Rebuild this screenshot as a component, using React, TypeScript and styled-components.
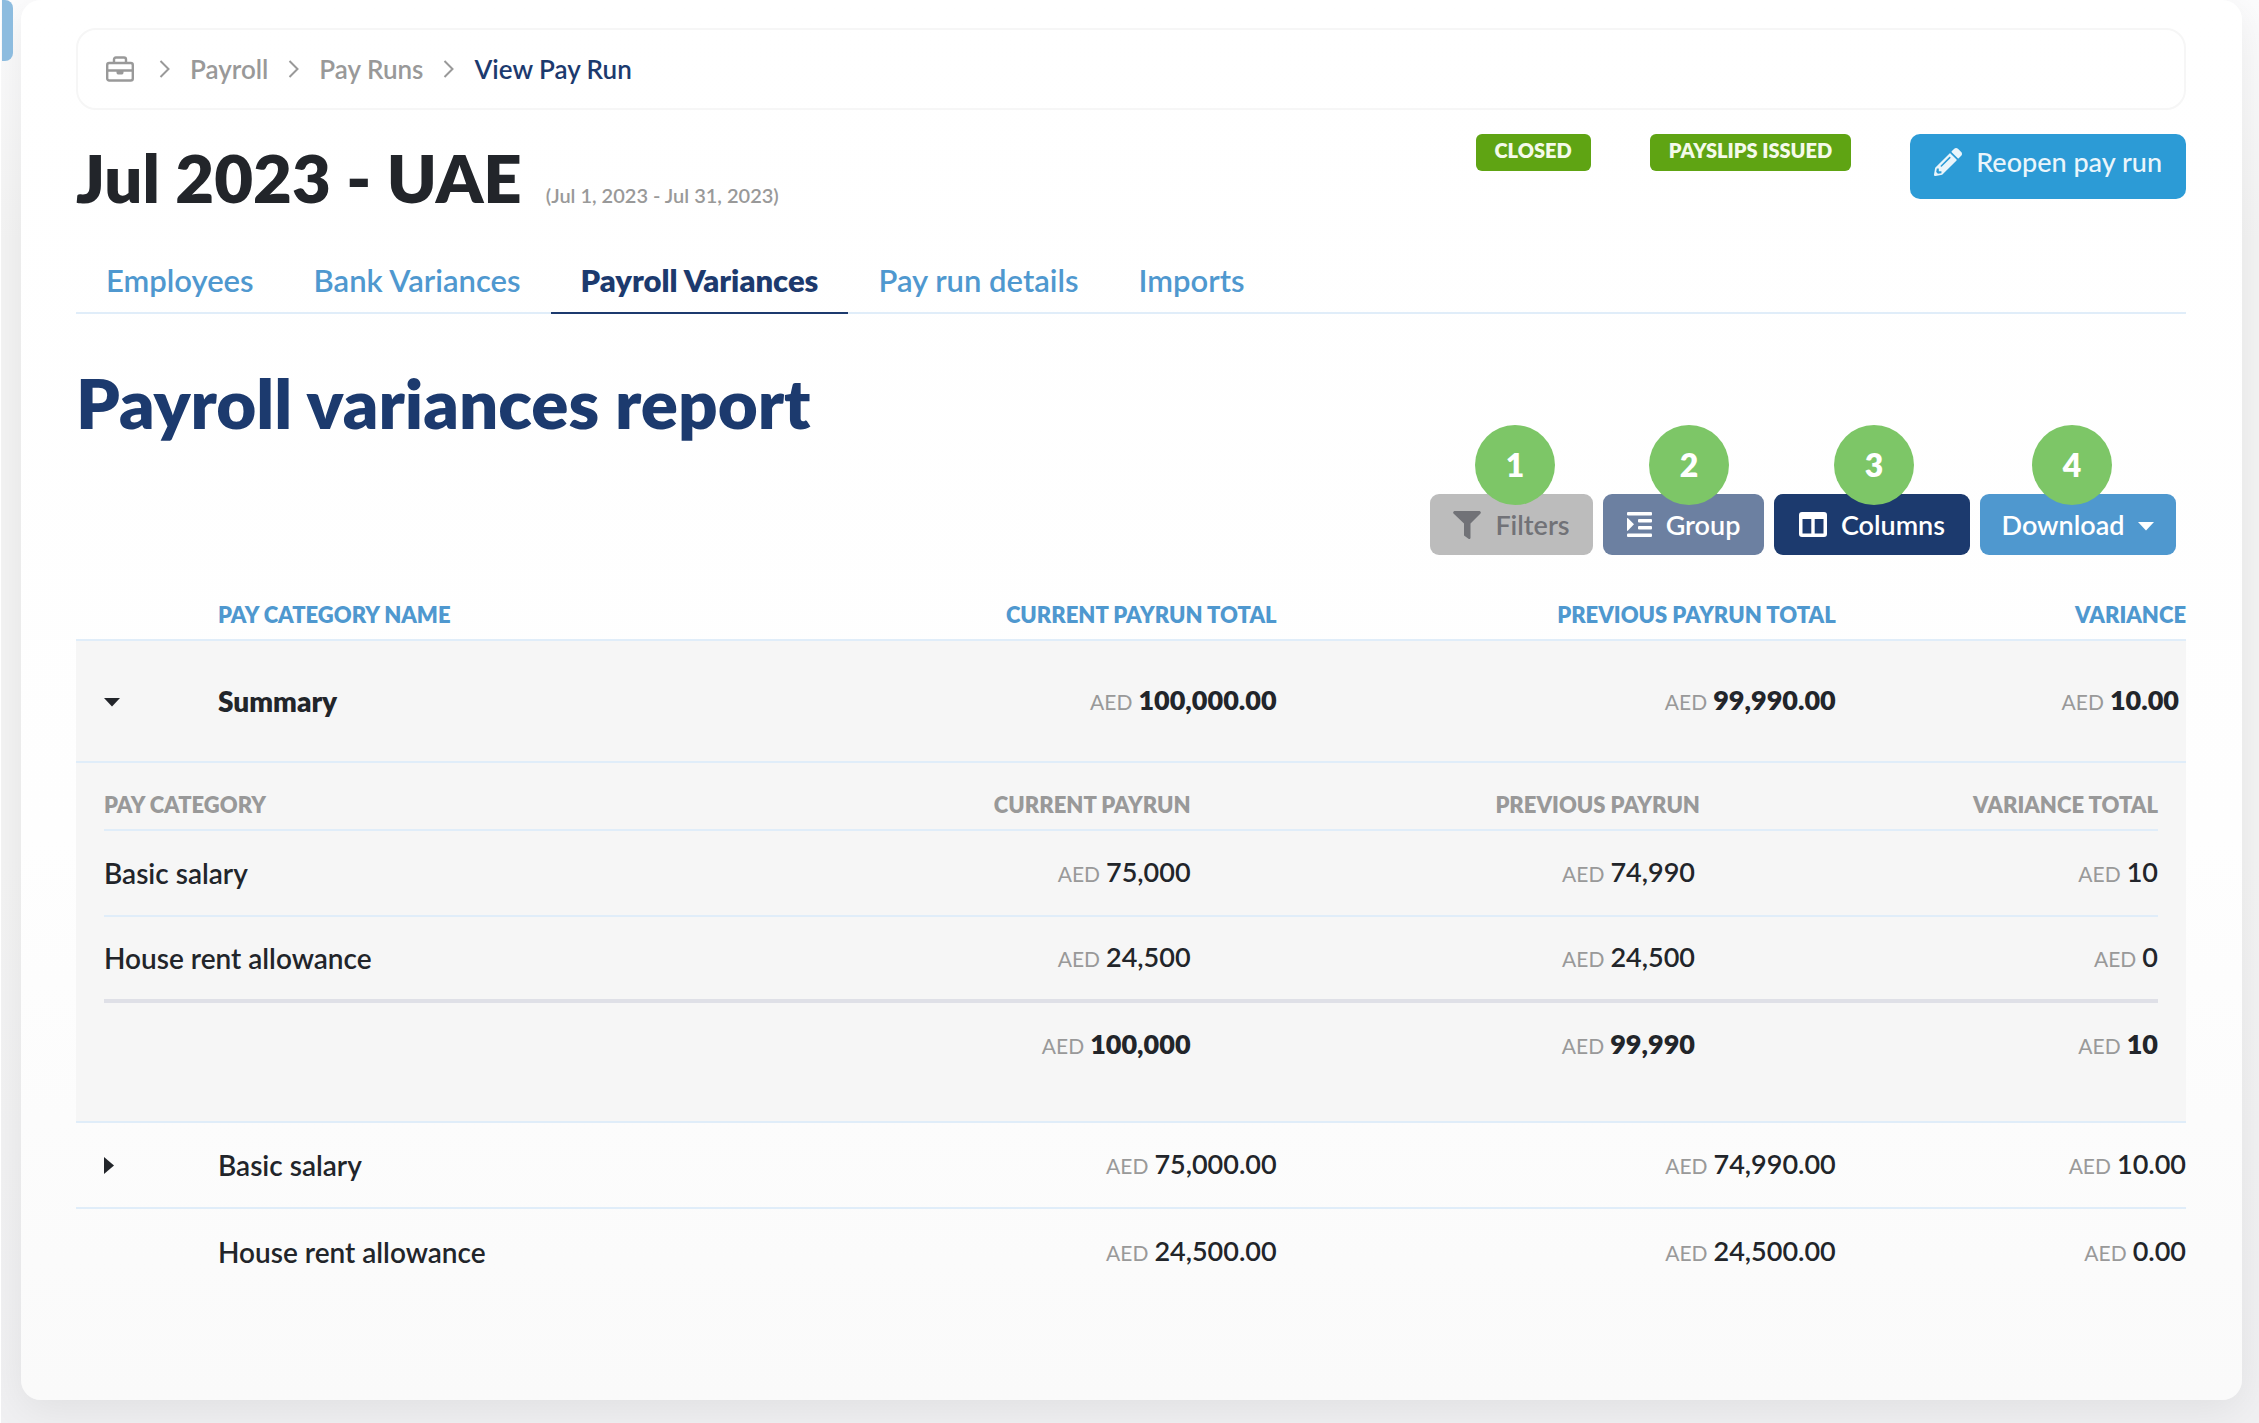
import React from "react";
import styled, { createGlobalStyle, css } from "styled-components";
import { FaPencilAlt } from "react-icons/fa";

const GlobalStyle = createGlobalStyle`
  *, *::before, *::after { box-sizing: border-box; }
  body {
    margin: 0;
    font-family: Lato, "Open Sans", sans-serif;
    font-size: 27px;
    line-height: 32px;
    font-weight: 600;
    color: #22252a;
    background: linear-gradient(#fcfcfd 0, #f4f4f4 240px, #f4f4f4 60%, #f0f0f2 100%);
  }
  h1, h2 { margin: 0; }
`;

const Page = styled.div`
  position: relative;
  display: flex;
  min-height: 100vh;
  padding: 0 17px 23px 20px;
  border-left: 1px solid #fff;
  overflow: hidden;
`;

const SideTab = styled.div`
  position: absolute;
  top: 0;
  left: 1px;
  width: 11px;
  height: 61px;
  background: #8dbcdf;
  border-radius: 0 8px 8px 0;
`;

const Panel = styled.main`
  flex: 1;
  min-width: 0;
  padding: 28px 56px 60px 55px;
  border-radius: 20px;
  background: linear-gradient(#fff 0, #fefefe 60%, #fafafa 100%);
  box-shadow: 0 10px 40px rgba(0, 0, 0, 0.07);
`;

const Breadcrumb = styled.nav`
  display: flex;
  align-items: center;
  gap: 20px;
  height: 82px;
  padding: 0 28px;
  border: 2px solid #f6f6f6;
  border-radius: 20px;
  font-size: 26px;
`;

const Crumb = styled.a<{ $current?: boolean }>`
  display: flex;
  color: ${(p) => (p.$current ? "#1c3a6e" : "#999")};
  text-decoration: none;
`;

const HomeCrumb = styled(Crumb)`
  margin-right: 5px;
`;

const TitleRow = styled.header`
  display: flex;
  align-items: flex-start;
  justify-content: space-between;
  padding-top: 24px;
`;

const TitleGroup = styled.div`
  display: flex;
  align-items: baseline;
  gap: 24px;
  padding-top: 3px;
`;

const Title = styled.h1`
  font-size: 67px;
  line-height: 80px;
  font-weight: 800;
`;

const Period = styled.span`
  font-size: 20px;
  color: #999;
`;

const StatusGroup = styled.div`
  display: flex;
  align-items: flex-start;
`;

const Tag = styled.span`
  height: 37px;
  margin-right: 59px;
  padding: 0 19px;
  border-radius: 6px;
  background: #5fa413;
  color: #f4faea;
  font-size: 20px;
  line-height: 32px;
  font-weight: 800;
`;

const ReopenButton = styled.button`
  display: flex;
  align-items: center;
  gap: 14px;
  height: 65px;
  padding: 0 24px 9px;
  border: 0;
  border-radius: 10px;
  background: #2c9bd6;
  color: #eaf5fb;
  font: inherit;
  font-weight: 500;
`;

const Tabs = styled.nav`
  display: flex;
  margin-top: 35px;
  border-bottom: 2px solid #e0edf9;
`;

const Tab = styled.a<{ $active?: boolean }>`
  margin-bottom: -2px;
  padding: 10px 30px 14px;
  border-bottom: 2px solid ${(p) => (p.$active ? "#1c3a6e" : "transparent")};
  color: ${(p) => (p.$active ? "#1c3a6e" : "#4f98cf")};
  font-size: 31px;
  line-height: 36px;
  font-weight: ${(p) => (p.$active ? 800 : 600)};
  text-decoration: none;
`;

const ReportTitle = styled.h2`
  padding-top: 49px;
  color: #1c3a6e;
  font-size: 69px;
  line-height: 80px;
  font-weight: 800;
`;

const Toolbar = styled.div`
  position: relative;
  display: flex;
  justify-content: flex-end;
  gap: 10px;
  width: max-content;
  margin: 51px 10px 0 auto;
`;

const tones = {
  grey: css`background: #bcbcbc; color: #717277;`,
  slate: css`background: #6c80a1; color: #fff;`,
  navy: css`background: #1c3a6e; color: #fff;`,
  blue: css`background: #4f98cf; color: #fff;`,
};

const ToolButton = styled.button<{ $tone: keyof typeof tones; $width: number }>`
  display: flex;
  align-items: center;
  justify-content: center;
  gap: 14px;
  width: ${(p) => p.$width}px;
  height: 61px;
  padding: 0;
  border: 0;
  border-radius: 9px;
  font: inherit;
  ${(p) => tones[p.$tone]}
`;

const Pin = styled.span<{ $x: number }>`
  position: absolute;
  top: -69px;
  left: ${(p) => p.$x}px;
  width: 80px;
  height: 80px;
  border-radius: 50%;
  background: #7dc667;
  color: #fff;
  font-size: 32px;
  line-height: 80px;
  font-weight: 800;
  text-align: center;
`;

const Table = styled.table`
  width: 100%;
  margin-top: 36px;
  table-layout: fixed;
  border-collapse: separate;
  border-spacing: 0;
`;

const NestedTable = styled(Table)`
  margin: 0;
`;

const Col = styled.col<{ $width?: string }>`
  width: ${(p) => p.$width ?? "auto"};
`;

const Head = styled.th<{ $muted?: boolean }>`
  height: ${(p) => (p.$muted ? 68 : 50)}px;
  padding: ${(p) => (p.$muted ? "18px 0 0" : "0")};
  border-bottom: 2px solid #e0edf9;
  color: ${(p) => (p.$muted ? "#999" : "#4f98cf")};
  font-size: 22px;
  font-weight: 800;
  text-align: right;
  white-space: nowrap;
`;

const NameHead = styled(Head)`
  text-align: left;
`;

const Cell = styled.td`
  padding: 0;
  text-align: right;
  white-space: nowrap;
  border-bottom: 2px solid #e0edf9;
`;

const NameCell = styled(Cell)`
  font-size: 28px;
  text-align: left;
`;

const ToggleCell = styled(Cell)`
  padding-left: 28px;
  text-align: left;
`;

const Row = styled.tr`
  height: 86px;
  &:last-child > td { border-bottom: 0; }
`;

const SummaryRow = styled.tr`
  height: 122px;
  background: #f6f6f6;
  font-weight: 800;
  & > td:last-child { padding-right: 7px; }
`;

const DetailRow = styled(Row)`
  & > td:nth-child(3) { padding-right: 5px; }
  &:nth-last-child(2) > td { border-bottom: 4px solid #dfe0e7; }
`;

const TotalRow = styled(DetailRow)`
  height: 118px;
  font-weight: 800;
  & > td { padding-bottom: 34px; }
`;

const NestedCell = styled(Cell)`
  padding: 0 28px;
  background: #f6f6f6;
`;

const Toggle = styled.button`
  display: flex;
  padding: 0;
  border: 0;
  background: none;
  color: #22252a;
`;

const Currency = styled.span`
  margin-right: 6px;
  color: #999;
  font-size: 21px;
  font-weight: 400;
`;

const Amount = ({ value }: { value: string }) => (
  <>
    <Currency>AED</Currency>
    {value}
  </>
);

const Briefcase = () => (
  <svg width="28" height="26" viewBox="0 0 28 26" fill="none" stroke="currentColor" strokeWidth="2.4">
    <rect x="1.200" y="7" width="25.600" height="17.500" rx="2" />
    <path d="M8 7V3.500Q8 1.500 10 1.500H18Q20 1.500 20 3.500V7M1 14.500H27" />
    <path d="M10.500 15h7v1.500q0 2-1.500 2h-4q-1.500 0-1.500-2z" fill="currentColor" stroke="none" />
  </svg>
);

const Chevron = () => (
  <svg width="11" height="18" viewBox="0 0 11 18" fill="none" stroke="#999" strokeWidth="2">
    <path d="M1.500 1L9.500 9L1.500 17" />
  </svg>
);

const FilterIcon = () => (
  <svg width="28" height="28" viewBox="0 0 28 28" fill="currentColor">
    <path d="M1.300 0H26.700Q28.500 1 27.500 2.500L17.500 12.500V27Q17 28.800 15.500 27.800L11 24.500V12.500L0.500 2.500Q-0.500 1 1.300 0Z" />
  </svg>
);

const GroupIcon = () => (
  <svg width="25" height="25" viewBox="0 0 25 25" fill="currentColor">
    <rect width="25" height="3.500" rx="1" />
    <rect x="11" y="7" width="14" height="3.500" rx="1" />
    <rect x="11" y="14" width="14" height="3.500" rx="1" />
    <rect y="21.500" width="25" height="3.500" rx="1" />
    <path d="M0 6.500Q0 5.500 1 6.200L7 12.300L1 18.600Q0 19.300 0 18.300Z" />
  </svg>
);

const ColumnsIcon = () => (
  <svg width="28" height="25" viewBox="0 0 28 25" fill="currentColor">
    <path fillRule="evenodd" d="M3 0H25Q28 0 28 3V22Q28 25 25 25H3Q0 25 0 22V3Q0 0 3 0ZM3.500 7V21.500H12.300V7ZM15.700 7V21.500H24.500V7Z" />
  </svg>
);

const CaretDown = () => (
  <svg width="16" height="12" viewBox="0 0 16 12" fill="currentColor">
    <path d="M0 3H16L8 11.500Z" />
  </svg>
);

const CaretRight = () => (
  <svg width="10" height="17" viewBox="0 0 10 17" fill="currentColor">
    <path d="M0 0L10 8.500L0 17Z" />
  </svg>
);

const tabs = ["Employees", "Bank Variances", "Payroll Variances", "Pay run details", "Imports"];

const details = [
  { name: "Basic salary", current: "75,000", previous: "74,990", variance: "10" },
  { name: "House rent allowance", current: "24,500", previous: "24,500", variance: "0" },
];

const categories = [
  { name: "Basic salary", current: "75,000.00", previous: "74,990.00", variance: "10.00", expandable: true },
  { name: "House rent allowance", current: "24,500.00", previous: "24,500.00", variance: "0.00", expandable: false },
];

const Details = () => (
  <NestedTable>
    <colgroup>
      <Col />
      <Col $width="24.8%" />
      <Col $width="24.8%" />
      <Col $width="22.3%" />
    </colgroup>
    <thead>
      <tr>
        <NameHead $muted>PAY CATEGORY</NameHead>
        <Head $muted>CURRENT PAYRUN</Head>
        <Head $muted>PREVIOUS PAYRUN</Head>
        <Head $muted>VARIANCE TOTAL</Head>
      </tr>
    </thead>
    <tbody>
      {details.map((d) => (
        <DetailRow key={d.name}>
          <NameCell>{d.name}</NameCell>
          <Cell><Amount value={d.current} /></Cell>
          <Cell><Amount value={d.previous} /></Cell>
          <Cell><Amount value={d.variance} /></Cell>
        </DetailRow>
      ))}
      <TotalRow>
        <NameCell />
        <Cell><Amount value="100,000" /></Cell>
        <Cell><Amount value="99,990" /></Cell>
        <Cell><Amount value="10" /></Cell>
      </TotalRow>
    </tbody>
  </NestedTable>
);

export default function App() {
  return (
    <>
      <GlobalStyle />
      <Page>
        <SideTab />
        <Panel>
          <Breadcrumb aria-label="Breadcrumb">
            <HomeCrumb href="#" aria-label="Home"><Briefcase /></HomeCrumb>
            <Chevron />
            <Crumb href="#">Payroll</Crumb>
            <Chevron />
            <Crumb href="#">Pay Runs</Crumb>
            <Chevron />
            <Crumb href="#" $current>View Pay Run</Crumb>
          </Breadcrumb>

          <TitleRow>
            <TitleGroup>
              <Title>Jul 2023 - UAE</Title>
              <Period>(Jul 1, 2023 - Jul 31, 2023)</Period>
            </TitleGroup>
            <StatusGroup>
              <Tag>CLOSED</Tag>
              <Tag>PAYSLIPS ISSUED</Tag>
              <ReopenButton type="button"><FaPencilAlt size={28} />Reopen pay run</ReopenButton>
            </StatusGroup>
          </TitleRow>

          <Tabs>
            {tabs.map((t) => (
              <Tab key={t} href="#" $active={t === "Payroll Variances"}>{t}</Tab>
            ))}
          </Tabs>

          <ReportTitle>Payroll variances report</ReportTitle>

          <Toolbar>
            <ToolButton type="button" $tone="grey" $width={163}><FilterIcon />Filters</ToolButton>
            <ToolButton type="button" $tone="slate" $width={161}><GroupIcon />Group</ToolButton>
            <ToolButton type="button" $tone="navy" $width={196}><ColumnsIcon />Columns</ToolButton>
            <ToolButton type="button" $tone="blue" $width={196}>Download<CaretDown /></ToolButton>
            <Pin $x={45}>1</Pin>
            <Pin $x={219}>2</Pin>
            <Pin $x={404}>3</Pin>
            <Pin $x={602}>4</Pin>
          </Toolbar>

          <Table>
            <colgroup>
              <Col $width="142px" />
              <Col />
              <Col $width="26.5%" />
              <Col $width="26.5%" />
              <Col $width="16.6%" />
            </colgroup>
            <thead>
              <tr>
                <Head aria-label="Expand" />
                <NameHead>PAY CATEGORY NAME</NameHead>
                <Head>CURRENT PAYRUN TOTAL</Head>
                <Head>PREVIOUS PAYRUN TOTAL</Head>
                <Head>VARIANCE</Head>
              </tr>
            </thead>
            <tbody>
              <SummaryRow>
                <ToggleCell><Toggle type="button" aria-label="Collapse Summary"><CaretDown /></Toggle></ToggleCell>
                <NameCell>Summary</NameCell>
                <Cell><Amount value="100,000.00" /></Cell>
                <Cell><Amount value="99,990.00" /></Cell>
                <Cell><Amount value="10.00" /></Cell>
              </SummaryRow>
              <tr>
                <NestedCell colSpan={5}><Details /></NestedCell>
              </tr>
              {categories.map((c) => (
                <Row key={c.name}>
                  <ToggleCell>
                    {c.expandable && (
                      <Toggle type="button" aria-label={`Expand ${c.name}`}><CaretRight /></Toggle>
                    )}
                  </ToggleCell>
                  <NameCell>{c.name}</NameCell>
                  <Cell><Amount value={c.current} /></Cell>
                  <Cell><Amount value={c.previous} /></Cell>
                  <Cell><Amount value={c.variance} /></Cell>
                </Row>
              ))}
            </tbody>
          </Table>
        </Panel>
      </Page>
    </>
  );
}
